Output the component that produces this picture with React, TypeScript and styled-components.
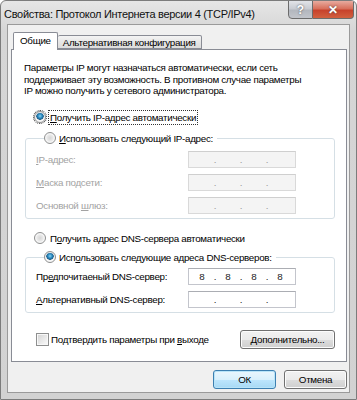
import React from "react"
import styled, { createGlobalStyle } from "styled-components"

const GlobalStyle = createGlobalStyle`
  html, body {
    margin: 0;
    padding: 0;
    background: #ffffff;
  }
  * {
    box-sizing: border-box;
  }
`

const font = `"Liberation Sans", Arial, sans-serif`

const Window = styled.div`
  width: 357px;
  height: 400px;
  display: flex;
  flex-direction: column;
  border: 1px solid #7c7c7c;
  border-radius: 6px 6px 0 0;
  background: linear-gradient(#e6e6e6, #d6d6d6 30px, #d2d2d2);
  font-family: ${font};
  font-size: 9.8px;
  letter-spacing: -0.3px;
  color: #000;
  overflow: hidden;
`

const TitleBar = styled.div`
  height: 23px;
  display: flex;
  align-items: flex-start;
  padding-left: 3px;
`

const Title = styled.div`
  flex: 1;
  font-size: 11px;
  line-height: 12px;
  padding-top: 7px;
  color: #111;
  white-space: nowrap;
`

const Caption = styled.div`
  display: flex;
  margin-right: 2px;
  margin-top: -1px;
`

const CaptionButton = styled.div<{ $close?: boolean }>`
  width: ${(p) => (p.$close ? 41 : 25)}px;
  height: 19px;
  display: flex;
  align-items: center;
  justify-content: center;
  border: 1px solid #6c6c6c;
  border-left-width: ${(p) => (p.$close ? 0 : 1)}px;
  border-radius: ${(p) => (p.$close ? "0 0 4px 0" : "0 0 0 4px")};
  background: ${(p) =>
    p.$close
      ? "linear-gradient(#e8ab9f, #d8705c 45%, #c7422c 55%, #d2603f)"
      : "linear-gradient(#e2e4e8, #c9ccd2 45%, #b3b7be 55%, #c2c5cb)"};
  color: #fff;
  font-size: 12px;
  font-weight: bold;
  letter-spacing: 0;
  text-shadow: 0 0 2px #444;
`

const Client = styled.div`
  flex: 1;
  margin: 0 6px 6px 6px;
  border: 1px solid #9a9a9a;
  background: #f0f0f0;
  display: flex;
  flex-direction: column;
`

const TabStrip = styled.div`
  display: flex;
  align-items: flex-end;
  margin-top: 7px;
  padding-left: 5px;
  height: 17px;
  position: relative;
  z-index: 1;
`

const Tab = styled.div<{ $active?: boolean }>`
  height: ${(p) => (p.$active ? 18 : 14)}px;
  padding: 0 ${(p) => (p.$active ? 6 : 5)}px;
  display: flex;
  align-items: center;
  padding-bottom: ${(p) => (p.$active ? 2 : 0)}px;
  border: 1px solid #898c95;
  border-bottom: ${(p) => (p.$active ? "none" : "1px solid #898c95")};
  border-left-width: ${(p) => (p.$active ? 1 : 0)}px;
  border-radius: 2px 2px 0 0;
  background: ${(p) => (p.$active ? "#ffffff" : "linear-gradient(#f4f4f4, #e6e6e6 50%, #dcdcdc)")};
  margin-bottom: ${(p) => (p.$active ? -1 : 0)}px;
`

const Panel = styled.div`
  margin: 0 2px 0 3px;
  height: 313px;
  background: #fff;
  border: 1px solid #898c95;
  padding: 12px 11px 0 12px;
  display: flex;
  flex-direction: column;
`

const Intro = styled.p`
  margin: 0;
  line-height: 11.5px;
`

const Choice = styled.label<{ $top: number; $focus?: boolean }>`
  display: flex;
  align-items: center;
  gap: 3px;
  margin-top: ${(p) => p.$top}px;
  margin-left: 10px;
  height: 13px;
  line-height: 13px;
  span {
    outline: ${(p) => (p.$focus ? "1px dotted #333" : "none")};
    outline-offset: 0;
    padding: 0 1px;
  }
`

const Radio = styled.span<{ $checked?: boolean }>`
  width: 12px;
  height: 12px;
  flex: none;
  border-radius: 50%;
  border: 1px solid #8e8f8f;
  background: ${(p) =>
    p.$checked
      ? "radial-gradient(circle at 50% 40%, #8fd0f0 0, #2d8fc4 2px, #1c5d8a 3.5px, #e8e8e8 4px, #ffffff 5px)"
      : "radial-gradient(circle at 50% 50%, #d6d6d6 0, #e8e8e8 3px, #fdfdfd 5px)"};
  box-shadow: inset 0 0 0 1px #f6f6f6;
`

const Group = styled.fieldset<{ $padTop: number; $top: number }>`
  margin: ${(p) => p.$top}px 0 0 1px;
  padding: ${(p) => p.$padTop}px 0 4px 10px;
  border: 1px solid #d5dfe5;
  border-radius: 3px;
  display: flex;
  flex-direction: column;
  gap: 6px;
  min-width: 0;
`

const GroupLegend = styled.legend`
  margin-left: 8px;
  padding: 0 4px 0 0;
  height: 13px;
  display: flex;
  align-items: center;
  gap: 3px;
  line-height: 13px;
`

const FieldRow = styled.div<{ $disabled?: boolean }>`
  display: flex;
  align-items: center;
  height: 17px;
  color: ${(p) => (p.$disabled ? "#a3a3a3" : "#000")};
`

const FieldLabel = styled.span`
  width: 152px;
  flex: none;
`

const IpBox = styled.div<{ $disabled?: boolean }>`
  width: 108px;
  height: 17px;
  display: flex;
  align-items: center;
  padding-left: 3px;
  border: 1px solid ${(p) => (p.$disabled ? "#d9d9d9" : "#c3c5cc")};
  border-top-color: ${(p) => (p.$disabled ? "#cfcfcf" : "#abadb3")};
  background: ${(p) => (p.$disabled ? "#f4f4f4" : "#ffffff")};
  color: ${(p) => (p.$disabled ? "#9a9a9a" : "#222")};
  letter-spacing: 0;
`

const Octet = styled.span`
  width: 20px;
  text-align: center;
`

const Dot = styled.span`
  width: 6px;
  text-align: center;
`

const BottomRow = styled.div`
  display: flex;
  align-items: center;
  margin-top: 17px;
  padding-left: 12px;
`

const Check = styled.label`
  flex: 1;
  display: flex;
  align-items: center;
  gap: 2px;
`

const CheckBox = styled.span`
  width: 13px;
  height: 13px;
  border: 1px solid #8e8f8f;
  background: linear-gradient(135deg, #d2d2d2, #f4f4f4 80%);
  box-shadow: inset 0 0 0 1px #f8f8f8;
`

const Button = styled.button<{ $width: number; $default?: boolean }>`
  width: ${(p) => p.$width}px;
  height: 19px;
  padding: 0;
  font-family: ${font};
  font-size: 9.8px;
  letter-spacing: -0.3px;
  color: #000;
  border: 1px solid ${(p) => (p.$default ? "#3c7fb1" : "#707070")};
  border-radius: 3px;
  background: ${(p) =>
    p.$default
      ? "linear-gradient(#eaf6fd, #d9f0fc 50%, #bee6fd 50%, #a7d9f5)"
      : "linear-gradient(#f2f2f2, #ebebeb 50%, #dddddd 50%, #cfcfcf)"};
  box-shadow: inset 0 0 0 1px ${(p) => (p.$default ? "#b9e4f8" : "#fcfcfc")};
`

const Footer = styled.div`
  display: flex;
  justify-content: flex-end;
  gap: 8px;
  margin: 8px 2px 0 0;
`

function Ip({ value, disabled }: { value?: string[]; disabled?: boolean }) {
  const parts = value ?? ["", "", "", ""]
  return (
    <IpBox $disabled={disabled}>
      {parts.map((v, i) => (
        <React.Fragment key={i}>
          <Octet>{v}</Octet>
          {i < 3 && <Dot>.</Dot>}
        </React.Fragment>
      ))}
    </IpBox>
  )
}

export default function App() {
  return (
    <>
      <GlobalStyle />
      <Window>
        <TitleBar>
          <Title>Свойства: Протокол Интернета версии 4 (TCP/IPv4)</Title>
          <Caption>
            <CaptionButton>?</CaptionButton>
            <CaptionButton $close>✕</CaptionButton>
          </Caption>
        </TitleBar>
        <Client>
          <TabStrip>
            <Tab $active>Общие</Tab>
            <Tab>Альтернативная конфигурация</Tab>
          </TabStrip>
          <Panel>
            <Intro>
              Параметры IP могут назначаться автоматически, если сеть
              <br />
              поддерживает эту возможность. В противном случае параметры
              <br />
              IP можно получить у сетевого администратора.
            </Intro>
            <Choice $top={14} $focus>
              <Radio $checked />
              <span>
                <u>П</u>олучить IP-адрес автоматически
              </span>
            </Choice>
            <Group $padTop={6} $top={8}>
              <GroupLegend>
                <Radio />
                <span>
                  <u>И</u>спользовать следующий IP-адрес:
                </span>
              </GroupLegend>
              <FieldRow $disabled>
                <FieldLabel>
                  <u>I</u>P-адрес:
                </FieldLabel>
                <Ip disabled />
              </FieldRow>
              <FieldRow $disabled>
                <FieldLabel>
                  <u>М</u>аска подсети:
                </FieldLabel>
                <Ip disabled />
              </FieldRow>
              <FieldRow $disabled>
                <FieldLabel>
                  Основной <u>ш</u>люз:
                </FieldLabel>
                <Ip disabled />
              </FieldRow>
            </Group>
            <Choice $top={13}>
              <Radio />
              <span>
                П<u>о</u>лучить адрес DNS-сервера автоматически
              </span>
            </Choice>
            <Group $padTop={4} $top={6}>
              <GroupLegend>
                <Radio $checked />
                <span>
                  Исп<u>о</u>льзовать следующие адреса DNS-серверов:
                </span>
              </GroupLegend>
              <FieldRow>
                <FieldLabel>
                  Пр<u>е</u>дпочитаеный DNS-сервер:
                </FieldLabel>
                <Ip value={["8", "8", "8", "8"]} />
              </FieldRow>
              <FieldRow>
                <FieldLabel>
                  <u>А</u>льтернативный DNS-сервер:
                </FieldLabel>
                <Ip />
              </FieldRow>
            </Group>
            <BottomRow>
              <Check>
                <CheckBox />
                <span>
                  Подтвердить параметры при <u>в</u>ыходе
                </span>
              </Check>
              <Button $width={95}>
                <u>Д</u>ополнительно...
              </Button>
            </BottomRow>
          </Panel>
          <Footer>
            <Button $width={63} $default>
              ОК
            </Button>
            <Button $width={63}>Отмена</Button>
          </Footer>
        </Client>
      </Window>
    </>
  )
}
